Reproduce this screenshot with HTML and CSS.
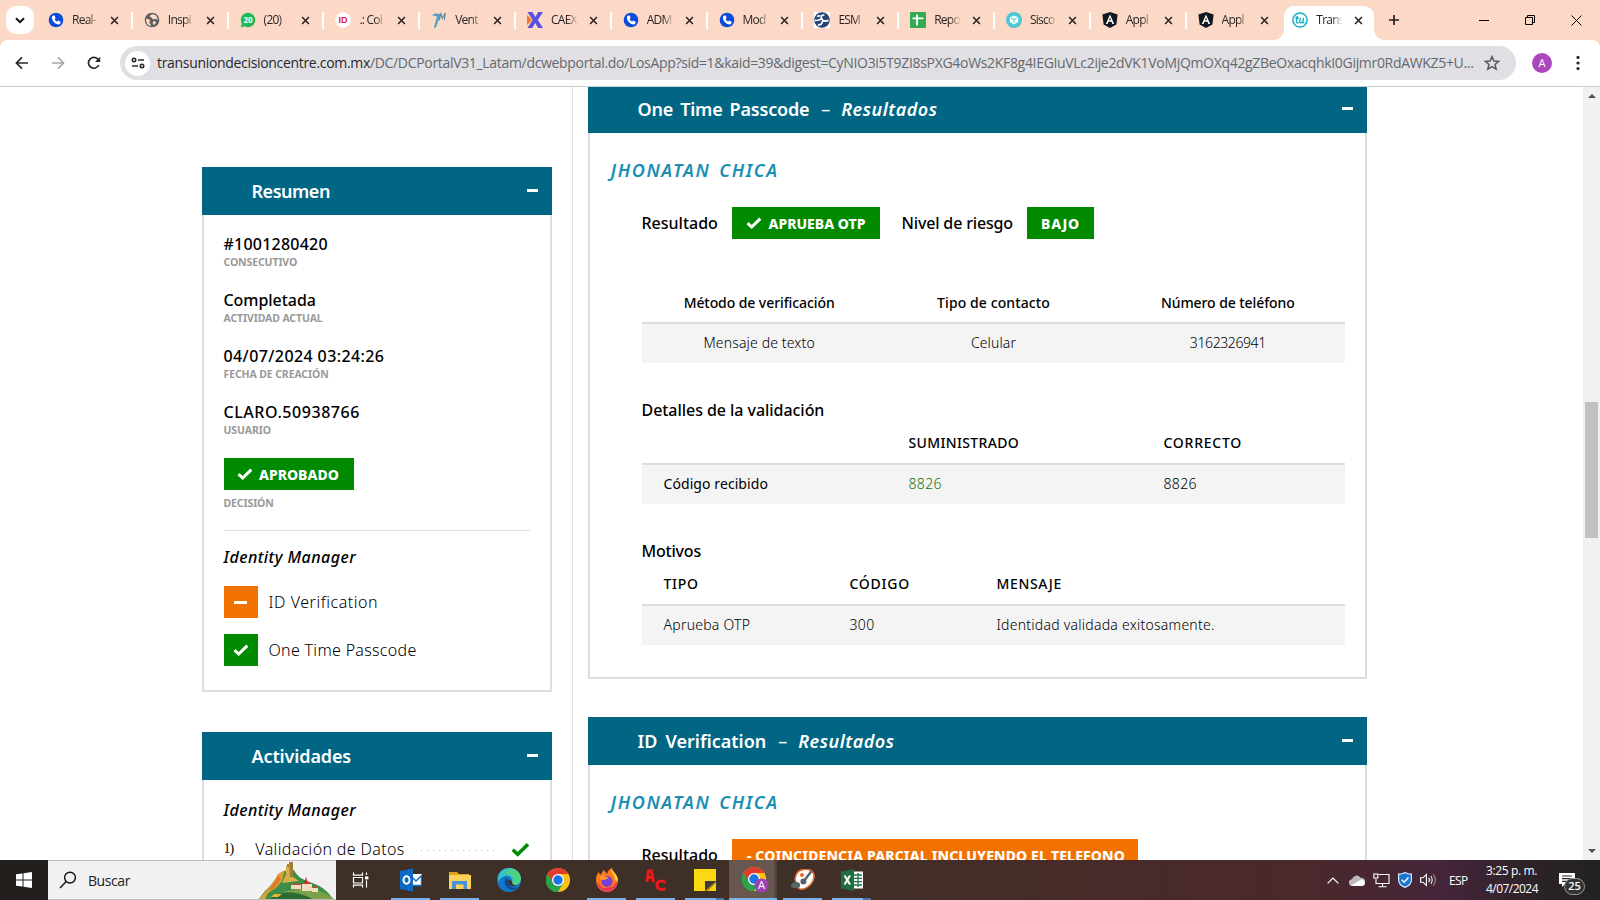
FILE: index.html
```html
<!DOCTYPE html>
<html lang="es">
<head>
<meta charset="utf-8">
<title>TransUnion Decision Centre</title>
<link rel="stylesheet" href="styles.css">
</head>
<body>
<svg class="defs" width="0" height="0">
  <symbol id="phone" viewBox="0 0 16 16"><circle cx="8" cy="8" r="7.3" fill="#0b4be0"/><path d="M5.2 3.6 6.6 3.4 7.6 6 6.6 7 C7 8.2 7.9 9.1 9.1 9.6 L10.1 8.5 12.6 9.7 12.3 11.4 C11.7 12.4 10.6 12.6 9.3 12.2 C6.6 11.3 4.6 9.2 4 6.4 C3.8 5.1 4.2 4.1 5.2 3.6Z" fill="#fff"/></symbol>
  <symbol id="x" viewBox="0 0 10 10"><path d="M1.2 1.2 8.8 8.8M8.8 1.2 1.2 8.8" stroke="#222" stroke-width="1.7" fill="none"/></symbol>
  <symbol id="angular" viewBox="0 0 16 16"><path d="M8 0 15.6 2.6 14.4 12.4 8 16 1.6 12.4 .4 2.6Z" fill="#111820"/><path d="M8 2.4 12.2 12H10.4L9.5 9.8H6.5L5.6 12H3.8ZM8 5.6 7.1 8.3H8.9Z" fill="#fff" fill-rule="evenodd"/></symbol>
  <symbol id="check" viewBox="0 0 16 12"><path d="M1.5 6.2 5.7 10 14.3 1.6" fill="none" stroke="currentColor" stroke-width="3"/></symbol>
  <symbol id="chrome" viewBox="0 0 24 24"><circle cx="12" cy="12" r="12" fill="#fbc116"/><path d="M12 12 1.6 6A12 12 0 0 1 22.4 6H12Z" fill="#e33b2e"/><path d="M1.6 6A12 12 0 0 0 12 24L17.2 15 12 12 6.8 15Z" fill="#2ba24c"/><path d="M1.6 6 6.8 15 12 12 10 6Z" fill="#e33b2e"/><path d="M1.6 6 6.8 15 12 18 10 24A12 12 0 0 1 1.6 6Z" fill="#2ba24c"/><circle cx="12" cy="12" r="6" fill="#fff"/><circle cx="12" cy="12" r="4.7" fill="#1a73e8"/></symbol>
</svg>

<div class="tabstrip">
  <div class="tabsearch"><svg width="10" height="7" viewBox="0 0 10 7"><path d="M1 1.2 5 5.2 9 1.2" fill="none" stroke="#111" stroke-width="2"/></svg></div>
  <div class="tabs">
    <div class="tab"><svg class="fav"><use href="#phone"/></svg><span class="tt">Real-</span><svg class="tx"><use href="#x"/></svg></div>
    <div class="tab"><svg class="fav" viewBox="0 0 16 16"><circle cx="8" cy="8" r="7.3" fill="#5d5f61"/><path d="M2.2 6.5C3.6 7.2 5.4 7 6 8.2S4.6 9.8 5.6 11.2 7 13 6.6 14.2C4 13.6 1.4 10.6 2.2 6.5ZM8.2 2.2C7 3.2 5.6 3 6 4.4S8.4 5.2 8.4 6.6 10.2 7.2 11.4 7 13.4 7.6 13.8 8C13.9 5 11.4 2 8.2 2.2ZM9 9.4C10.6 8.8 12 9.4 12.2 10.6L10 13C9 12.4 8.4 10.4 9 9.4Z" fill="#fcd9c6"/></svg><span class="tt">Inspi</span><svg class="tx"><use href="#x"/></svg></div>
    <div class="tab"><svg class="fav" viewBox="0 0 16 16"><path d="M8 .8A7.2 7.2 0 1 1 4.6 14.3L.8 15.4 1.7 11.5A7.2 7.2 0 0 1 8 .8Z" fill="#1fb955"/><text x="8" y="11" class="f20">20</text></svg><span class="tt">(20)</span><svg class="tx"><use href="#x"/></svg></div>
    <div class="tab"><svg class="fav" viewBox="0 0 16 16"><circle cx="8" cy="8" r="7.8" fill="#fff"/><text x="8" y="11.2" class="fid">ID</text></svg><span class="tt">.: Co<span>i</span></span><svg class="tx"><use href="#x"/></svg></div>
    <div class="tab"><svg class="fav" viewBox="0 0 16 16"><path d="M1 3.4C3.4 1 6.6 1 9.6 2.2L5 15.6H2.8L6 4.8C4.4 3.6 2.6 3.4 1 3.4Z" fill="#4fa0cf"/><path d="M8 8.4 10 1.6 11.2 6.6 14.4 1 13.2 8.2" fill="none" stroke="#5a86a6" stroke-width="1.1"/></svg><span class="tt">Vent</span><svg class="tx"><use href="#x"/></svg></div>
    <div class="tab"><svg class="fav" viewBox="0 0 16 16"><path d="M0 2.5 4.8 8 0 13.5Z" fill="#f47a2a"/><path d="M.5 0H5.4L8.4 5 11.2 0H16L10.8 8 16 16H11.2L8.2 11 5.2 16H.5L5.6 8Z" fill="#5b50e6"/></svg><span class="tt">CAEX</span><svg class="tx"><use href="#x"/></svg></div>
    <div class="tab"><svg class="fav"><use href="#phone"/></svg><span class="tt">ADM</span><svg class="tx"><use href="#x"/></svg></div>
    <div class="tab"><svg class="fav"><use href="#phone"/></svg><span class="tt">Mod</span><svg class="tx"><use href="#x"/></svg></div>
    <div class="tab"><svg class="fav" viewBox="0 0 16 16"><rect width="16" height="16" fill="#fff"/><circle cx="8" cy="8" r="7.8" fill="#26437c"/><path d="M.6 8.4C3.4 8.8 5.6 8.2 7.6 6.6M7.6 6.6C6.6 4.4 8 2.4 10.4 3.2M7.6 6.6C8.4 8.8 11 9.6 14.6 8.4M4 12.6C6 13.4 8.4 12 8.6 9M3.2 4.6C4.4 3.6 5.4 3.6 6.4 4" fill="none" stroke="#fff" stroke-width="1.7"/></svg><span class="tt">ESM</span><svg class="tx"><use href="#x"/></svg></div>
    <div class="tab"><svg class="fav" viewBox="0 0 16 16"><rect width="16" height="16" rx="1.2" fill="#34a853"/><path d="M2.5 6.4H13.5M7 2.5V13.5" stroke="#fff" stroke-width="1.8"/></svg><span class="tt">Repo</span><svg class="tx"><use href="#x"/></svg></div>
    <div class="tab"><svg class="fav" viewBox="0 0 16 16"><circle cx="8" cy="8" r="8" fill="#4cc8d4"/><path d="M8 3.4 12.2 5.4V10L8 12.6 3.8 10V5.4Z" fill="#fff"/><path d="M5 6.2 8 7.6 11 6.2M8 7.6V11" fill="none" stroke="#4cc8d4"/></svg><span class="tt">Sisco</span><svg class="tx"><use href="#x"/></svg></div>
    <div class="tab"><svg class="fav"><use href="#angular"/></svg><span class="tt">Appl</span><svg class="tx"><use href="#x"/></svg></div>
    <div class="tab last"><svg class="fav"><use href="#angular"/></svg><span class="tt">Appl</span><svg class="tx"><use href="#x"/></svg></div>
    <div class="tab active"><svg class="fav" viewBox="0 0 16 16"><circle cx="8" cy="8" r="7.1" fill="#fff" stroke="#17afc4" stroke-width="1.5"/><path d="M5.2 3.8 4.4 9.4C4.3 11.2 5.6 11.2 6.6 10.4M3.2 6H7M8.4 6 7.8 9.2C7.7 11.4 10.3 11.2 11 9.2L11.6 6 10.9 10.2C10.9 11 11.6 11.1 12.6 10.5" fill="none" stroke="#17afc4" stroke-width="1.4"/></svg><span class="tt">Trans</span><svg class="tx"><use href="#x"/></svg></div>
  </div>
  <svg class="plus" width="12" height="12" viewBox="0 0 12 12"><path d="M6 1V11M1 6H11" stroke="#222" stroke-width="1.7"/></svg>
  <div class="winbtns">
    <svg width="10" height="10" viewBox="0 0 10 10"><path d="M0 5.5H10" stroke="#000"/></svg>
    <svg width="10" height="10" viewBox="0 0 10 10"><path d="M.5 2.5H7.5V9.5H.5ZM2.5 2.5V.5H9.5V7.5H7.5" fill="none" stroke="#000"/></svg>
    <svg width="11" height="11" viewBox="0 0 11 11"><path d="M.5 .5 10.5 10.5M10.5 .5 .5 10.5" stroke="#000"/></svg>
  </div>
</div>

<div class="toolbar">
  <div class="nav">
    <svg width="14" height="14" viewBox="0 0 14 14"><path d="M13 7H2M7 1.4 1.4 7 7 12.6" fill="none" stroke="#26282b" stroke-width="1.7"/></svg>
    <svg width="14" height="14" viewBox="0 0 14 14"><path d="M1 7H12M7 1.4 12.6 7 7 12.6" fill="none" stroke="#a3a5a8" stroke-width="1.5"/></svg>
    <svg width="14" height="14" viewBox="0 0 14 14"><path d="M11.8 9A5.4 5.4 0 1 1 11.2 3.6L12.4 5" fill="none" stroke="#26282b" stroke-width="1.7"/><path d="M13.2 .8V6H8Z" fill="#26282b"/></svg>
  </div>
  <div class="omnibox">
    <span class="site"><svg width="14" height="12" viewBox="0 0 14 12"><g fill="none" stroke="#26282b" stroke-width="1.6"><circle cx="3" cy="3" r="1.7"/><path d="M7 3H13M1 9H7"/><circle cx="11" cy="9" r="1.7"/></g></svg></span>
    <span class="url"><b>transuniondecisioncentre.com.mx</b>/DC/DCPortalV31_Latam/dcwebportal.do/LosApp?sid=1&amp;kaid=39&amp;digest=CyNIO3i5T9ZI8sPXG4oWs2KF8g4IEGIuVLc2ije2dVK1VoMjQmOXq42gZBeOxacqhkI0Gijmr0RdAWKZ5+U...</span>
    <svg width="16" height="16" viewBox="0 0 16 16"><path d="M8 1.6 9.9 6 14.7 6.4 11 9.5 12.2 14.2 8 11.7 3.8 14.2 5 9.5 1.3 6.4 6.1 6Z" fill="none" stroke="#56595d" stroke-width="1.5"/></svg>
  </div>
  <span class="avatar">A</span>
  <svg class="kebab" width="4" height="16" viewBox="0 0 4 16"><g fill="#26282b"><circle cx="2" cy="2.4" r="1.6"/><circle cx="2" cy="8" r="1.6"/><circle cx="2" cy="13.6" r="1.6"/></g></svg>
</div>

<div class="viewport">
  <aside class="side">
    <section class="panel">
      <header class="phead"><span class="h1">Resumen</span><i class="minus"></i></header>
      <div class="pbody summary">
        <div class="item"><div class="val n0">#1001280420</div><div class="lab">CONSECUTIVO</div></div>
        <div class="item"><div class="val n1">Completada</div><div class="lab">ACTIVIDAD ACTUAL</div></div>
        <div class="item"><div class="val n2">04/07/2024 03:24:26</div><div class="lab">FECHA DE CREACIÓN</div></div>
        <div class="item"><div class="val n3">CLARO.50938766</div><div class="lab">USUARIO</div></div>
        <div class="tag green approve"><svg class="ck"><use href="#check"/></svg>APROBADO</div>
        <div class="lab dec">DECISIÓN</div>
        <div class="rule"></div>
        <div class="im">Identity Manager</div>
        <div class="step"><span class="sq orange"><i class="minus wide"></i></span><span class="s1">ID Verification</span></div>
        <div class="step"><span class="sq green"><svg class="ck"><use href="#check"/></svg></span><span class="s2">One Time Passcode</span></div>
      </div>
    </section>
    <section class="panel second">
      <header class="phead"><span class="h2">Actividades</span><i class="minus"></i></header>
      <div class="pbody acts">
        <div class="im">Identity Manager</div>
        <div class="act"><span class="num">1)</span><span class="an">Validación de Datos</span><span class="dots"></span><svg class="ckg"><use href="#check"/></svg></div>
      </div>
    </section>
  </aside>

  <main class="main">
    <section class="panel">
      <header class="phead"><span class="h3">One Time Passcode</span><span class="dash">–</span><em>Resultados</em><i class="minus"></i></header>
      <div class="pbody otp">
        <div class="person">JHONATAN CHICA</div>
        <div class="res"><span class="rl">Resultado</span><span class="tag green w148"><svg class="ck"><use href="#check"/></svg>APRUEBA OTP</span><span class="nl">Nivel de riesgo</span><span class="tag green w67">BAJO</span></div>
        <div class="table t1">
          <div class="tr th"><span class="a0">Método de verificación</span><span>Tipo de contacto</span><span class="a0">Número de teléfono</span></div>
          <div class="tr td"><span class="a0">Mensaje de texto</span><span>Celular</span><span class="a1">3162326941</span></div>
        </div>
        <div class="sub">Detalles de la validación</div>
        <div class="table t2">
          <div class="tr th up"><span></span><span class="b0">SUMINISTRADO</span><span class="b1">CORRECTO</span></div>
          <div class="tr td"><span class="md">Código recibido</span><span class="ok">8826</span><span class="b0">8826</span></div>
        </div>
        <div class="sub mo">Motivos</div>
        <div class="table t3">
          <div class="tr th up"><span class="b1">TIPO</span><span class="b1">CÓDIGO</span><span class="b2">MENSAJE</span></div>
          <div class="tr td"><span>Aprueba OTP</span><span class="b0">300</span><span>Identidad validada exitosamente.</span></div>
        </div>
      </div>
    </section>
    <section class="panel third">
      <header class="phead"><span class="h4">ID Verification</span><span class="dash">–</span><em>Resultados</em><i class="minus"></i></header>
      <div class="pbody idv">
        <div class="person">JHONATAN CHICA</div>
        <div class="res"><span class="rl">Resultado</span><span class="tag orange w406">- COINCIDENCIA PARCIAL INCLUYENDO EL TELEFONO</span></div>
      </div>
    </section>
  </main>

  <div class="scroll">
    <svg width="8" height="4" viewBox="0 0 8 4"><path d="M0 4 4 0 8 4Z" fill="#505050"/></svg>
    <i class="thumb"></i>
    <svg width="8" height="4" viewBox="0 0 8 4"><path d="M0 0 4 4 8 0Z" fill="#505050"/></svg>
  </div>
</div>

<div class="taskbar">
  <div class="start"><svg width="16" height="16" viewBox="0 0 16 16"><path d="M0 2.3 6.5 1.4V7.5H0ZM7.5 1.2 16 0V7.5H7.5ZM0 8.5H6.5V14.6L0 13.7ZM7.5 8.5H16V16L7.5 14.8Z" fill="#fff"/></svg></div>
  <div class="search">
    <svg width="18" height="18" viewBox="0 0 18 18"><circle cx="11" cy="6.6" r="5.4" fill="none" stroke="#111" stroke-width="1.4"/><path d="M7.2 10.6 1 17" stroke="#111" stroke-width="1.4"/></svg>
    <span>Buscar</span>
    <svg class="land" width="78" height="38" viewBox="0 0 78 38"><path d="M1 38C6 30 12 26 16 20 20 14 22 12 26 10L36 9C40 17 45 18 51 21 62 24 69 29 75 38Z" fill="#3b8f46"/><path d="M1 38C8 30 14 24 20 13L27 9 24 20 18 27 10 32 7 38Z" fill="#d9a233"/><path d="M10 30C14 24 18 20 20 14L23 18 17 27Z" fill="#e07a2a"/><path d="M28 5H35V16L41 20 24 22 28 13Z" fill="#d8b04a"/><path d="M31 1H35V16H32Z" fill="#a07c30"/><path d="M29 3H31V6H29Z" fill="#a07c30"/><path d="M20 34C34 25 62 25 76 38H16Z" fill="#7aa04a"/><path d="M12 38C24 28 42 31 54 38Z" fill="#2c6a34"/><path d="M33 24H43V28H33ZM44 23H54V30H44ZM54 26H60V31H54Z" fill="#f0dcc0"/><path d="M32 24 38 22 44 24ZM43 23 49 20 55 23ZM53 27 57 25 61 27Z" fill="#b54a32"/><path d="M46.5 22 48 15.5 49.5 22Z" fill="#c22"/><path d="M16 33H24L20 36H13Z" fill="#eeb23a"/></svg>
  </div>
  <div class="apps">
    <div class="app tv"><svg width="18" height="16" viewBox="0 0 18 16"><g fill="none" stroke="#fff" stroke-width="1.2"><path d="M1.5 .6V3.2H10.5V.6M1.5 5.5H10.5V11H1.5ZM1.5 15.6V13.2H10.5V15.6M14.5 .6V3M14.5 8.5V15.6"/></g><rect x="13" y="4.4" width="3.4" height="3" fill="#fff"/></svg></div>
    <div class="app run"><svg width="22" height="24" viewBox="0 0 22 24"><rect x="9" y="6" width="13" height="12" fill="#fff"/><path d="M10 7 16 13 22 7M11 17.5H21.5V8" fill="none" stroke="#0f6cc0" stroke-width="1.4"/><path d="M0 3 13 .5V23.5L0 21Z" fill="#0c6ac4"/><ellipse cx="6.5" cy="12" rx="3" ry="3.8" fill="none" stroke="#fff" stroke-width="2"/></svg></div>
    <div class="app run"><svg width="22" height="20" viewBox="0 0 22 20"><path d="M0 2H8L10 4H20V10H0Z" fill="#e0a21c"/><path d="M0 5H22V19H0Z" fill="#fbd35c"/><path d="M3 19V11H18V19H14.5V14.5H7V19Z" fill="#4a92d8"/></svg></div>
    <div class="app"><svg width="24" height="24" viewBox="0 0 24 24"><circle cx="12" cy="12" r="12" fill="#1677c9"/><path d="M1 9C3 1 11-2 18 1.6 24 5 26 13 21 16 18 18 14 16.4 15 14 16.5 10 12 7 8 8 4 9 1.6 12 1 15Z" fill="#36c3c6"/><path d="M14 .2C22 1 26 9 23 14 21 17.6 15.6 17.4 15 15 18 11 15 5 8 5.4Z" fill="#57d66e" opacity=".75"/><path d="M9 10C6 14 8 21 15 22 18 22 20 20.6 21.4 19 15 21.6 9.6 17 11 11Z" fill="#0d4a98"/><path d="M11.6 11.6C10 14 12 18 16.6 18.4L22.6 17C19 19 14 16.4 15.2 13.6Z" fill="#3f3027"/></svg></div>
    <div class="app"><svg width="24" height="24"><use href="#chrome"/></svg></div>
    <div class="app run"><svg width="24" height="24" viewBox="0 0 24 24"><path d="M1 12C1 8 2 6 4 4L5 7C7 5 8 4 8 2 10 3 11 5 12 6 13 3 14 1 17 0 16 3 22 5 23 12 23 19 18 24 12 24S1 19 1 12Z" fill="#ff7a1c"/><path d="M17 0C15 4 20 6 20 12L23 13C23 6 17 4 17 0Z" fill="#ffd43a"/><path d="M2 14C3 21 9 24 14 23.6 20 22 22 17 22 14L17 19 8 20Z" fill="#f0355e"/><circle cx="12" cy="13.4" r="5.6" fill="#7a3fd6"/><path d="M4 9C7 7 11 8 14 10L9 12C6 12 5 11 4 9Z" fill="#ff9a24"/></svg></div>
    <div class="app run"><svg width="22" height="24" viewBox="0 0 22 24"><g fill="none" stroke="#f01818" stroke-width="2.8"><path d="M2 14 3.4 3H6.4L8.6 14M3 9.5H8"/><path d="M20.5 14.5C16 11.5 11.5 13.5 12 17.5S17 22.5 20.5 20.5"/></g></svg></div>
    <div class="app run multi"><svg width="22" height="22" viewBox="0 0 22 22"><path d="M0 0H22V12L12 22H0Z" fill="#fbd714"/><path d="M11 22V12H22Z" fill="#3a3a3a"/><path d="M22 13V22H13Z" fill="#f6cf0a"/></svg></div>
    <div class="app cur"><svg width="27" height="26" viewBox="0 0 27 26"><use href="#chrome" width="24" height="24"/><circle cx="19.5" cy="18.5" r="7" fill="#9c3fb8"/><text x="19.5" y="22.3" class="ca">A</text></svg></div>
    <div class="app run"><svg width="24" height="22" viewBox="0 0 24 22"><path d="M6 4C9 0 15-.5 19 1 23 3 24 7 22 12 19 18 13 21 9 20 5 19 7 15 5 13S4 8 6 4Z" fill="#fff" stroke="#e0662a" stroke-width="1.6"/><path d="M20.5 2 13 12M1 17C3 13 8 14 8 16S4 19 1 17Z" fill="#566" stroke="#566" stroke-width="2.4"/><circle cx="12.4" cy="12.5" r="3" fill="#556068"/><circle cx="11" cy="6" r="2" fill="#e0662a"/></svg></div>
    <div class="app run multi"><svg width="22" height="22" viewBox="0 0 22 22"><rect x="11" y="2.5" width="11" height="17" fill="#fff"/><path d="M13 6H21M13 9.3H21M13 12.6H21M13 16H21M17 4V18" stroke="#207245" stroke-width="1.3"/><path d="M0 2.5 13 0V22L0 19.5Z" fill="#1d6f42"/><path d="M3.6 6.5 9 15.5M9 6.5 3.6 15.5" stroke="#fff" stroke-width="2"/></svg></div>
  </div>
  <div class="tray">
    <svg width="12" height="7" viewBox="0 0 12 7"><path d="M.6 6.4 6 1 11.4 6.4" fill="none" stroke="#fff" stroke-width="1.2"/></svg>
    <svg width="16" height="11" viewBox="0 0 16 11"><path d="M3.5 11A3.4 3.4 0 0 1 3 4.2 4.6 4.6 0 0 1 11.4 2.8 4 4 0 0 1 13 11Z" fill="#bdb9bc"/><path d="M2 10.4 10.4 5.6A3 3 0 0 1 15.6 7.4C16.2 9.4 14.8 11 13 11H3.5Z" fill="#fff"/></svg>
    <svg width="17" height="15" viewBox="0 0 17 15"><g fill="none" stroke="#fff" stroke-width="1.1"><path d="M5.5 1.5H16V10.5H3V6M9.5 10.5V13.5M5.5 13.7H13.5"/><rect x=".8" y="1" width="4" height="4"/></g></svg>
    <svg width="14" height="16" viewBox="0 0 14 16"><path d="M7 .6C9 1.8 11 2.2 13.4 2.2V8C13.4 11.6 10.6 14 7 15.4 3.4 14 .6 11.6 .6 8V2.2C3 2.2 5 1.8 7 .6Z" fill="#1877d4" stroke="#dbeaf8" stroke-width="1.2"/><path d="M3.8 7.8 6.2 10.2 10.4 5.6" fill="none" stroke="#fff" stroke-width="1.5"/></svg>
    <svg width="17" height="14" viewBox="0 0 17 14"><g fill="none" stroke="#fff" stroke-width="1.1"><path d="M.6 4.8H3L6.4 1.6V12.4L3 9.2H.6Z"/><path d="M8.6 4.8C9.6 6 9.6 8 8.6 9.2M10.8 3C12.6 5 12.6 9 10.8 11"/><path d="M13.2 1.4C16.2 4.4 16.2 9.6 13.2 12.6" opacity=".5"/></g></svg>
    <span class="esp">ESP</span>
    <span class="clock"><span>3:25 p. m.</span><span class="date">4/07/2024</span></span>
    <span class="notif"><svg width="16" height="16" viewBox="0 0 16 16"><path d="M0 1H16V12H6L3 15V12H0Z" fill="#fff"/><path d="M3 4H13M3 6.7H13M3 9.4H9" stroke="#222" stroke-width="1.2"/></svg><b>25</b></span>
  </div>
</div>
</body>
</html>
```
FILE: styles.css
```css
*{box-sizing:border-box}
body{margin:0;width:1600px;height:900px;overflow:hidden;background:#fff;font-family:"Open Sans","Noto Sans",sans-serif;display:flex;flex-direction:column}
svg{display:block;flex:none}
.defs{position:absolute}

/* browser tabs */
.tabstrip{height:48px;margin-bottom:-8px;padding-bottom:8px;background:#fcd9c6;display:flex;align-items:center;flex:none}
.tabsearch{width:28px;height:28px;margin:0 3px 0 6px;border-radius:10px;background:#fff;display:flex;align-items:center;justify-content:center}
.tabs{display:flex;align-self:flex-end;height:34px}
.tab{width:95.8px;display:flex;align-items:center;padding:0 0 6px 11px;position:relative}
.tab:not(.active):not(.last)::after{content:"";margin-left:12px;width:2px;height:17px;background:#fff}
.tab.active{width:90px;background:#fff;border-radius:10px 10px 0 0;padding-left:8px;margin-left:2px}
.tab.active::before,.tab.active::after{content:"";position:absolute;bottom:0;width:10px;height:10px}
.tab.active::before{left:-10px;background:radial-gradient(circle at 0 0,transparent 9.5px,#fff 10px)}
.tab.active::after{right:-10px;background:radial-gradient(circle at 100% 0,transparent 9.5px,#fff 10px)}
.fav{width:16px;height:16px}
.tt{width:27px;margin-left:8px;white-space:nowrap;font-size:12px;line-height:18px;letter-spacing:-.75px;color:#2a2524;-webkit-mask-image:linear-gradient(90deg,#000 60%,transparent 100%);mask-image:linear-gradient(90deg,#000 60%,transparent 100%)}
.tx{width:9px;height:9px;margin-left:11px}
.f20{font:700 8px "Open Sans",sans-serif;fill:#fff;text-anchor:middle}
.fid{font:700 9px "Liberation Sans",sans-serif;fill:#dc1c4e;text-anchor:middle}
.plus{margin-left:14px}
.winbtns{margin-left:auto;display:flex;gap:36px;padding-right:18px}

/* toolbar */
.toolbar{height:47px;background:#fff;border-radius:8px 8px 0 0;border-bottom:1px solid #c9cdce;display:flex;align-items:center;flex:none;position:relative}
.nav{display:flex;gap:22px;padding-left:15px;width:120px}
.omnibox{width:1396px;height:34px;border-radius:17px;background:#e0e0e4;display:flex;align-items:center;padding-left:5px}
.site{width:25px;height:25px;border-radius:50%;background:#fff;display:flex;align-items:center;justify-content:center}
.url{width:1327px;margin-left:7px;font-size:14px;line-height:20px;letter-spacing:-.32px;white-space:nowrap;color:#65686c}
.url b{font-weight:400;color:#26282b}
.avatar{margin-left:16px;width:20px;height:20px;border-radius:50%;background:#ab47bc;color:#fff;font-size:11px;line-height:20px;text-align:center}
.kebab{margin-left:24px}

/* page */
.viewport{height:773px;display:flex;overflow:hidden;flex:none;font-family:"Noto Sans","Open Sans",sans-serif;color:#000;white-space:nowrap}
.side{width:573px;padding:80px 20px 0 202px;border-right:1px solid #ddd}
.main{width:794px;padding-left:15px;margin-top:-2px}
.phead{height:48px;background:#006684;color:#fff;display:flex;align-items:center;padding:0 14px 1px 49.5px;font-size:18px;font-weight:600;line-height:24px}
.minus{display:block;width:11px;height:3px;background:#fff;margin-left:auto}
.h1{letter-spacing:-.48px}
.h2{letter-spacing:-.12px}
.h3{letter-spacing:-.2px;word-spacing:2.6px}
.h4{letter-spacing:0;word-spacing:3.5px}
.dash{margin:0 12px 0 12px;font-weight:400;width:8px}
.phead em{letter-spacing:.5px}
.pbody{border:2px solid #ddd;border-top:0}
.summary{padding:18px 20px 24px 19.5px}
.item{height:36px;margin-bottom:20px}
.val{font-size:16px;font-weight:500;line-height:22px}
.lab{font-size:10.5px;font-weight:700;line-height:14px;color:#999;letter-spacing:-.11px}
.n0{letter-spacing:.22px}
.n1{letter-spacing:-.05px}
.n2{letter-spacing:.4px}
.n3{letter-spacing:.55px}
.tag{display:flex;align-items:center;height:32px;padding-left:14px;color:#fff;font-size:14px;font-weight:800;letter-spacing:0;flex:none}
.green{background:#008a00}
.orange{background:#f27200}
.ck{width:16px;height:12px;margin-right:6.5px;color:#fff}
.approve{width:130px;margin-top:21px;padding-left:13px}
.dec{margin-top:6px}
.rule{height:1px;margin:20px 0 14px;background:#ddd}
.im{font-size:16px;font-weight:500;font-style:italic;line-height:24px;letter-spacing:.45px}
.step{height:32px;display:flex;align-items:center;gap:11px;font-size:16px;font-weight:300;line-height:22px}
.im + .step{margin:17px 0 16px}
.sq{width:34px;height:32px;display:flex;align-items:center;justify-content:center}
.sq .ck{margin:0}
.minus.wide{width:13px;margin:0}
.s1{letter-spacing:.55px}
.s2{letter-spacing:.31px}
.second{margin-top:40px}
.acts{height:110px;padding:18px 20px 0 19.5px}
.act{margin-top:15px;display:flex;align-items:center;font-size:16px;font-weight:300;line-height:24px}
.num{width:32px;font:14px/24px "Liberation Serif",serif;letter-spacing:-1px}
.an{width:149px;letter-spacing:.35px}
.dots{width:74px;height:1px;margin:2px 16px 0 17px;background:repeating-linear-gradient(90deg,#bbb 0 1px,transparent 1px 6px)}
.ckg{width:19px;height:15px;color:#008a00}

.main .phead{width:779px}
.otp{padding:25px 19px 32px}
.person{padding-left:1.5px;font-size:18px;font-weight:600;font-style:italic;line-height:24px;color:#1a8eb2;letter-spacing:1.6px;word-spacing:2.6px}
.res{display:flex;align-items:center;height:32px;margin:25px 0 0 32.5px}
.rl,.nl{font-size:16px;font-weight:500;line-height:24px;letter-spacing:0}
.rl{width:90.5px}
.nl{width:125.5px;margin-left:21.5px;letter-spacing:-.16px}
.w148{width:148px}
.w67{width:67px;letter-spacing:.78px}
.w406{width:406px;letter-spacing:.13px;padding-left:15px}
.table{margin-left:33px;font-size:14px;line-height:20px;width:703px}
.tr{display:grid;align-items:center}
.th{height:40px;font-weight:500;border-bottom:2px solid #ddd;padding-bottom:1px}
.td{height:39px;background:#f4f4f4;font-weight:300;padding-bottom:1px}
.up{height:42px;padding-bottom:0}
.t1{margin-top:45px}
.t1 .tr{grid-template-columns:1fr 1fr 1fr;text-align:center;letter-spacing:.1px}
.t1 .th .a0{letter-spacing:-.08px}
.t1 .a0{letter-spacing:.15px}
.t1 .a1{letter-spacing:-.4px}
.t2 .tr{grid-template-columns:245px 255px 1fr;padding-left:21.5px}
.t3 .tr{grid-template-columns:186px 147px 1fr;padding-left:21.5px}
.b0{letter-spacing:.34px}
.up .b0{letter-spacing:.35px}
.b1{letter-spacing:.75px}
.b2{letter-spacing:.65px}
.t3 .td{letter-spacing:.25px}
.md{font-weight:400;letter-spacing:.08px}
.ok{color:#0c740c;letter-spacing:.34px}
.sub{margin:35px 0 1px 32.5px;font-size:16px;font-weight:500;line-height:24px;letter-spacing:-.05px}
.mo{letter-spacing:-.2px}
.third{margin-top:38px}
.idv{padding:25px 19px 0;height:120px}
.idv .res{padding-bottom:0}
.scroll{margin-left:auto;width:17px;background:#f1f1f1;display:flex;flex-direction:column;align-items:center;padding:7px 0}
.thumb{width:13px;height:136px;margin:304px 0 auto;background:#c1c1c1}

/* taskbar */
.taskbar{height:40px;display:flex;background:linear-gradient(90deg,#3f3027 0,#3f3027 50%,#482a29 70%,#4a282c 82%,#452539 90%,#2a2226 96.5%,#222 100%);color:#fff;flex:none}
.start{width:48px;background:#221e1b;display:flex;align-items:center;justify-content:center}
.search{width:288px;background:#f1f1f1;border:1px solid #bbb;border-width:1px 0;display:flex;align-items:center;padding-left:11px;color:#222;font-size:14px;letter-spacing:-.42px}
.search span{margin-left:11px;width:43px}
.land{margin-left:auto}
.apps{display:flex}
.app{width:49px;height:40px;display:flex;align-items:center;justify-content:center;position:relative}
.app.tv{width:50px}
.run::after,.cur::after{content:"";position:absolute;left:5px;bottom:0;width:39px;height:2px;background:#76b3ec}
.multi::after{background:linear-gradient(90deg,#76b3ec 31px,#4a78a6 31px)}
.cur{background:#67574f;width:48px;padding-left:5px;margin-right:1px;border-right:1px solid #4d4039;box-shadow:inset -2px 0 #574840}
.cur::after{left:0;width:48px}
.ca{font:11px "Open Sans",sans-serif;fill:#fff;text-anchor:middle}
.tray{margin-left:auto;display:flex;align-items:center;font-size:12px}
.tray svg{margin-right:8px}
.tray svg:first-child{margin-right:10px}
.esp{margin-left:4px;width:37px;letter-spacing:-.66px}
.clock{width:73px;display:flex;flex-direction:column;line-height:18px;letter-spacing:-.37px}
.date{letter-spacing:-.54px}
.notif{position:relative;width:41px;height:16px}
.notif b{position:absolute;left:5px;top:6px;width:21px;height:17px;border:1px solid #999;border-radius:9px;background:#333;font-size:11px;line-height:14px;font-weight:600;text-align:center}
```
